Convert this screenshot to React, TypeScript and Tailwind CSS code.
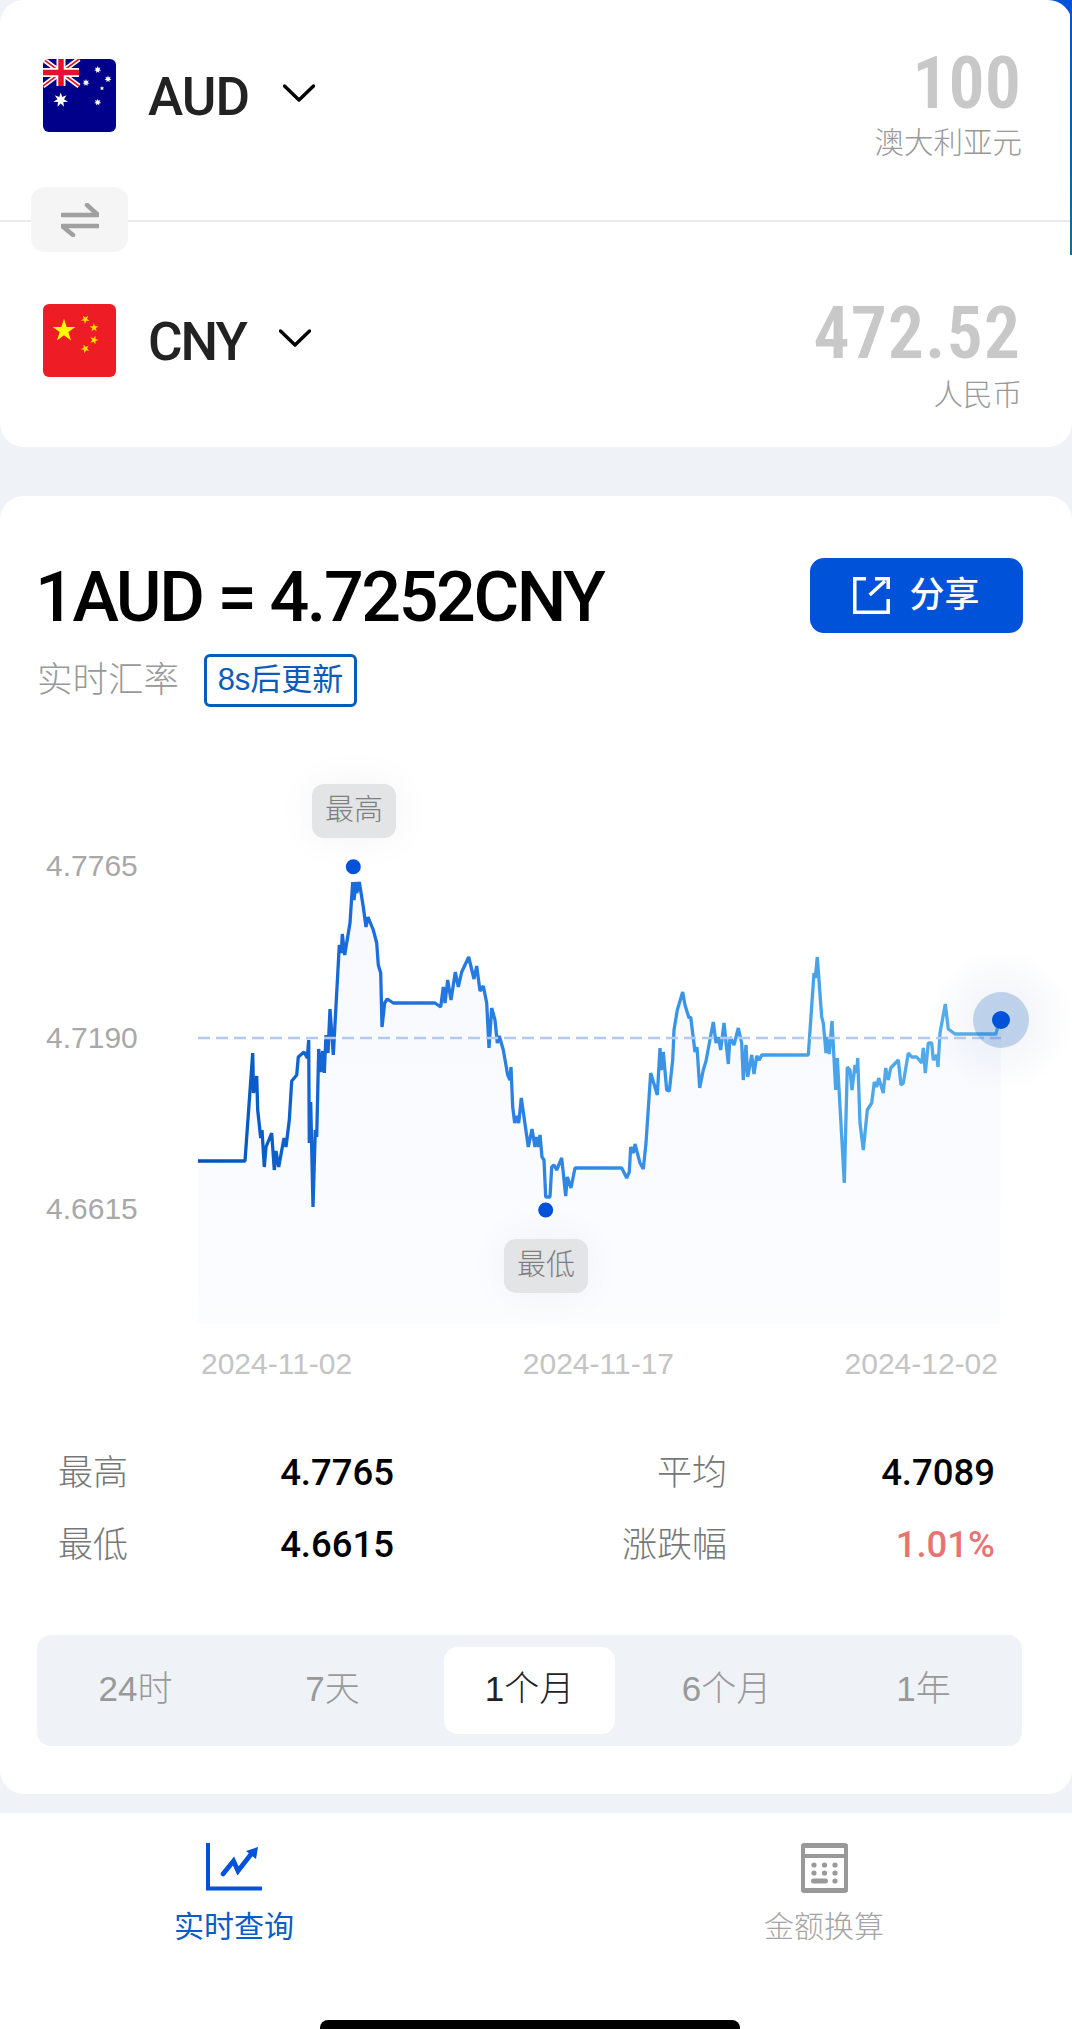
const SANS = "font-['Liberation_Sans','Noto_Sans_CJK_SC',sans-serif]"
const DIN = "font-['Roboto','Noto_Sans_CJK_SC',sans-serif]"

// chart line traced from the reference, in page coordinates
const LINE: [number, number][] = [
  [198, 1161], [245, 1161], [252.7, 1053], [253.5, 1093], [256.7, 1076], [257.7, 1110], [260.7, 1138], [262, 1130],
  [264.3, 1167], [266, 1147], [271.7, 1133], [274.3, 1170], [276, 1151], [278.7, 1167], [284, 1138], [286, 1147],
  [289.3, 1120], [291.7, 1081], [296.7, 1075], [298.3, 1057], [304, 1052], [307.3, 1058], [308.7, 1040], [309.3, 1143],
  [310.7, 1102], [313, 1207], [315.3, 1130], [316.7, 1137], [318.7, 1049], [320.7, 1072], [322.7, 1051], [324.3, 1073],
  [326, 1035], [328, 1053], [330, 1009], [333.3, 1055], [336.7, 993], [339.3, 945], [341.3, 953], [342.3, 934],
  [344.7, 955], [350, 923], [352.7, 882], [354, 900], [356, 882], [356.7, 893], [359.3, 882], [363.3, 907],
  [366, 927], [368, 917], [373.3, 930], [376.7, 943], [378.3, 965], [380.7, 973], [382, 1027], [384.7, 1003],
  [387.3, 999], [393.3, 1003], [435, 1003], [440.7, 1007], [443.3, 987], [445, 1003], [447.7, 980], [451, 1000],
  [455.3, 972], [458.3, 987], [461.7, 972], [468.7, 957], [474, 979], [476.7, 966], [480, 991], [483.3, 986],
  [486.7, 1003], [489, 1048], [491.7, 1008], [495, 1020], [497.3, 1043], [499.3, 1036], [503.3, 1050], [507.7, 1075],
  [510, 1080], [511, 1067], [512.7, 1107], [514.7, 1123], [516.7, 1116], [518.7, 1123], [521.3, 1098], [528.3, 1147],
  [532, 1129], [535, 1147], [536.7, 1137], [538.7, 1147], [540, 1135], [542, 1157], [544, 1160], [545.7, 1197],
  [550, 1197], [551.7, 1167], [554, 1165], [556.7, 1170], [561.7, 1158], [565.7, 1196], [567.3, 1177], [571, 1188],
  [575, 1168], [621.7, 1168], [626.7, 1178], [629.3, 1172], [630.7, 1147], [633.3, 1153], [635, 1144], [640, 1163],
  [643.3, 1169], [646, 1143], [650.7, 1073], [657.3, 1095], [660, 1048], [661.3, 1070], [663.3, 1052], [666.7, 1090],
  [669.3, 1091], [672.7, 1060], [674, 1030], [677.3, 1010], [682.7, 992], [685, 1005], [689, 1018], [690.7, 1017],
  [695, 1052], [697, 1047], [699.7, 1088], [703.3, 1070], [706, 1061], [713.3, 1022], [716, 1043], [718.3, 1037],
  [720.7, 1050], [724, 1023], [728.3, 1064], [730, 1037], [734, 1045], [738.3, 1028], [741.7, 1043], [743.3, 1080],
  [746, 1045], [747.7, 1077], [751.7, 1055], [754, 1074], [756.7, 1056], [759.3, 1060], [761.7, 1055], [808.3, 1055],
  [814, 973], [815.3, 978], [817.3, 957], [821.7, 1017], [823.3, 1023], [826, 1053], [827.3, 1037], [829.3, 1054],
  [832, 1021], [835.7, 1090], [837.3, 1058], [844.3, 1183], [847.3, 1067], [850, 1070], [852, 1090], [855, 1065],
  [856.7, 1073], [857.7, 1058], [860, 1123], [863.3, 1150], [867.3, 1110], [871.7, 1103], [874.3, 1082], [876.7, 1087],
  [878.7, 1078], [883.3, 1093], [885.7, 1068], [888.3, 1080], [890.7, 1068], [898.3, 1060], [901, 1085], [903.3, 1083],
  [908.3, 1053], [911.7, 1057], [916.7, 1057], [921.7, 1063], [923.3, 1048], [925.3, 1073], [928.3, 1043], [931.7, 1043],
  [933.3, 1060], [936.7, 1055], [938, 1067], [940, 1033], [945.3, 1004], [948.3, 1029], [955, 1034], [996, 1034],
  [997.3, 1028], [1001, 1020],
]
const linePoints = LINE.map(([x, y]) => `${x},${y}`).join(' ')
const areaPoints = `198,1324 ${linePoints} 1000,1324`

function star(cx: number, cy: number, r: number, n = 5, inner = 0.38, rot = -90) {
  const pts: string[] = []
  for (let i = 0; i < n * 2; i++) {
    const a = ((rot + (i * 180) / n) * Math.PI) / 180
    const d = i % 2 ? r * inner : r
    pts.push(`${(cx + d * Math.cos(a)).toFixed(2)},${(cy + d * Math.sin(a)).toFixed(2)}`)
  }
  return pts.join(' ')
}

function AudFlag() {
  return (
    <svg width="73" height="73" viewBox="0 0 73 73" className="shrink-0 rounded-[6px]">
      <rect width="73" height="73" fill="#00008b" />
      <path d="M0 0L36 27M36 0L0 27" stroke="#fff" strokeWidth="5" />
      <path d="M0 0L36 27M36 0L0 27" stroke="#e8112d" strokeWidth="1.6" />
      <path d="M18 0V27M0 13.5H36" stroke="#fff" strokeWidth="9" />
      <path d="M18 0V27M0 13.5H36" stroke="#e8112d" strokeWidth="5.5" />
      <polygon points={star(17.7, 41, 7.5, 7, 0.45)} fill="#fff" />
      <polygon points={star(54.7, 10.7, 3.6, 7, 0.5)} fill="#fff" />
      <polygon points={star(65, 20, 3.6, 7, 0.5)} fill="#fff" />
      <polygon points={star(43, 23.7, 3.6, 7, 0.5)} fill="#fff" />
      <polygon points={star(59, 29.3, 2.2, 5, 0.5)} fill="#fff" />
      <polygon points={star(54.7, 43.3, 3.6, 7, 0.5)} fill="#fff" />
    </svg>
  )
}

function CnyFlag() {
  return (
    <svg width="73" height="73" viewBox="0 0 73 73" className="shrink-0 rounded-[6px]">
      <rect width="73" height="73" fill="#ee1c25" />
      <polygon points={star(21, 26.7, 12)} fill="#ffff00" />
      <polygon points={star(42.3, 15.3, 4.6, 5, 0.38, -50)} fill="#ffdd00" />
      <polygon points={star(51, 23.7, 4.6, 5, 0.38, -20)} fill="#ffdd00" />
      <polygon points={star(51, 36, 4.6, 5, 0.38, 0)} fill="#ffdd00" />
      <polygon points={star(42.3, 44.7, 4.6, 5, 0.38, 30)} fill="#ffdd00" />
    </svg>
  )
}

function Chevron() {
  return (
    <svg width="32" height="18" viewBox="0 0 32 18" fill="none" stroke="#000" strokeWidth="3.4" strokeLinecap="round" strokeLinejoin="round">
      <path d="M1.5 2L16 16L30.5 2" />
    </svg>
  )
}

function CurrencyRow({ code, name, value, flag, codeClass, chevron, valueClass, blockClass, labelClass }: { code: string; name: string; value: string; flag: React.ReactNode; codeClass: string; chevron: string; valueClass: string; blockClass: string; labelClass: string }) {
  return (
    <div className="flex items-start justify-between pl-[43px] pr-[51px]">
      <div className="flex items-center">
        {flag}
        <span className={`${DIN} -mb-[2px] ml-[32px] mt-[2px] text-[53px] leading-[73px] font-medium font-stretch-[92%] text-[#222] ${codeClass}`}>{code}</span>
        <span className={chevron}>
          <Chevron />
        </span>
      </div>
      <div className={`text-right ${blockClass}`}>
        <div className={`${DIN} text-[72px] leading-[72px] font-semibold text-[#c8c8c8] ${valueClass}`}>{value}</div>
        <div className={`-mr-[1px] text-[29.5px] leading-[36px] font-light text-[#999] ${labelClass}`}>{name}</div>
      </div>
    </div>
  )
}

function ExchangeCard() {
  return (
    <section className="relative h-[447px] shrink-0 rounded-[24px] bg-white">
      <div className="h-[220px] pt-[59px]">
        <CurrencyRow code="AUD" name="澳大利亚元" value="100" flag={<AudFlag />} codeClass="tracking-[-1px]" chevron="ml-[34px] -mt-[6px]" valueClass="font-stretch-[85%]" blockClass="-mt-[11px]" labelClass="mt-[5px]" />
      </div>
      <div className="h-[2px] bg-[#e9ebee]" />
      <div className="pt-[82px]">
        <CurrencyRow code="CNY" name="人民币" value="472.52" flag={<CnyFlag />} codeClass="tracking-[-2px]" chevron="ml-[33px] -mt-[6px]" valueClass="font-stretch-[85%] tracking-[1px]" blockClass="-mt-[6px]" labelClass="mt-[7px]" />
      </div>
      {/* swap button sits on the divider */}
      <button className="absolute left-[31px] top-[187px] flex h-[65px] w-[97px] items-center justify-center rounded-[14px] bg-[#f5f5f5]">
        <svg width="38" height="34" viewBox="0 0 38 34" fill="none" stroke="#a0a0a0" strokeWidth="4.5" strokeLinecap="round" strokeLinejoin="round">
          <path d="M1 12H37L26 2" />
          <path d="M37 23H1L12 32" />
        </svg>
      </button>
    </section>
  )
}

function Tag({ label, className }: { label: string; className: string }) {
  return (
    <div className={`absolute flex h-[54px] w-[84px] items-center justify-center rounded-[12px] bg-[#e3e4e5] text-[29px] font-light text-[#7f7f7f] shadow-[0_0_40px_rgba(0,0,0,0.05)] ${className}`}>
      {label}
    </div>
  )
}

function Chart() {
  return (
    <div className="relative h-[633px]">
      <svg viewBox="0 707 1072 633" className="block h-full w-full">
        <defs>
          <linearGradient id="stroke" gradientUnits="userSpaceOnUse" x1="198" y1="0" x2="1000" y2="0">
            <stop offset="0" stopColor="#0052b9" />
            <stop offset="0.2" stopColor="#1a6cdc" />
            <stop offset="0.45" stopColor="#2f86e4" />
            <stop offset="0.8" stopColor="#49a5ea" />
            <stop offset="1" stopColor="#5aaee8" />
          </linearGradient>
          <linearGradient id="area" gradientUnits="userSpaceOnUse" x1="0" y1="880" x2="0" y2="1324">
            <stop offset="0" stopColor="#0052d9" stopOpacity="0.035" />
            <stop offset="1" stopColor="#0052d9" stopOpacity="0.015" />
          </linearGradient>
          <radialGradient id="glow">
            <stop offset="0.3" stopColor="#1d3a78" stopOpacity="0.05" />
            <stop offset="1" stopColor="#1d3a78" stopOpacity="0" />
          </radialGradient>
        </defs>
        <circle cx="1001" cy="1020" r="72" fill="url(#glow)" />
        <polygon points={areaPoints} fill="url(#area)" />
        <polyline points={linePoints} fill="none" stroke="url(#stroke)" strokeWidth="3.3" strokeLinejoin="bevel" />
        <line x1="198" y1="1038" x2="1001" y2="1038" stroke="#b3c9f0" strokeWidth="2.5" strokeDasharray="12 6" />
        <circle cx="1001" cy="1020" r="28" fill="#0052b9" fillOpacity="0.22" />
        <circle cx="1001" cy="1020" r="9" fill="#0052d9" />
        <circle cx="353.3" cy="866.7" r="7.5" fill="#0052d9" />
        <circle cx="545.7" cy="1210" r="7.5" fill="#0052d9" />
      </svg>
      <span className="absolute left-[46px] top-[139px] text-[30px] leading-[40px] text-[#a8a8a8]">4.7765</span>
      <span className="absolute left-[46px] top-[311px] text-[30px] leading-[40px] text-[#a8a8a8]">4.7190</span>
      <span className="absolute left-[46px] top-[482px] text-[30px] leading-[40px] text-[#a8a8a8]">4.6615</span>
      <Tag label="最高" className="left-[312px] top-[77px]" />
      <Tag label="最低" className="left-[504px] top-[532px]" />
    </div>
  )
}

function Stats() {
  const label = 'text-[35px] leading-[72px] font-light text-[#777]'
  const num = "font-['Roboto',sans-serif] text-right text-[36.5px] leading-[72px] font-medium"
  return (
    <div className="mt-[51px] grid grid-cols-[142px_194px_333px_268px] pl-[58px]">
      <span className={label}>最高</span>
      <span className={`${num} text-black`}>4.7765</span>
      <span className={`${label} text-right`}>平均</span>
      <span className={`${num} text-black`}>4.7089</span>
      <span className={label}>最低</span>
      <span className={`${num} text-black`}>4.6615</span>
      <span className={`${label} text-right`}>涨跌幅</span>
      <span className={`${num} text-[#e97373]`}>1.01%</span>
    </div>
  )
}

function RangeTabs() {
  const tabs = ['24时', '7天', '1个月', '6个月', '1年']
  return (
    <div className="mx-[37px] mt-[54px] grid h-[111px] w-[985px] grid-cols-5 items-center rounded-[14px] bg-[#eff3f8]">
      {tabs.map((tab) => (
        <button
          key={tab}
          className={
            tab === '1个月'
              ? 'mx-[13px] h-[87px] rounded-[14px] bg-white pb-[2px] text-[35px] font-light text-[#222]'
              : 'mx-[13px] h-[87px] pb-[2px] text-[35px] font-light text-[#999]'
          }
        >
          {tab}
        </button>
      ))}
    </div>
  )
}

function RateCard() {
  return (
    <section className="mt-[49px] h-[1298px] shrink-0 rounded-[24px] bg-white pt-[62px]">
      <div className="flex h-[75px] items-start justify-between pl-[35px] pr-[49px]">
        <h1 className={`${DIN} pt-[2px] text-[70px] leading-[75px] font-medium font-stretch-[89%] tracking-[-2.4px] text-black`}>1AUD = 4.7252CNY</h1>
        <button className="flex h-[75px] w-[213px] items-center justify-center gap-[19px] rounded-[14px] bg-[#0052d9] text-[35px] font-medium text-white">
          <svg width="37" height="37" viewBox="0 0 37 37" fill="none" stroke="#fff" strokeWidth="3.5">
            <path d="M13 1.8H1.8V35.2H35.2V22" />
            <path d="M22 1.8H35.2V12" />
            <path d="M16.7 18L32 4" />
          </svg>
          分享
        </button>
      </div>
      <div className="mt-[21px] flex items-center pl-[37px]">
        <span className="w-[167px] text-[35.5px] leading-[53px] font-light text-[#999]">实时汇率</span>
        <span className="flex h-[53px] w-[153px] items-center justify-center rounded-[6px] border-[3px] border-[#0b5cb8] text-[31px] text-[#0b5cb8]">8s后更新</span>
      </div>
      <Chart />
      <div className="flex h-[46px] items-center justify-between pl-[201px] pr-[74px] text-[30px] text-[#c4c4c4]">
        <span>2024-11-02</span>
        <span>2024-11-17</span>
        <span>2024-12-02</span>
      </div>
      <Stats />
      <RangeTabs />
    </section>
  )
}

function BottomNav() {
  return (
    <nav className="relative mt-[19px] flex-1 bg-white pl-[174px] pt-[30px]">
      <div className="flex gap-[470px]">
        <div className="flex w-[120px] flex-col items-center">
          <svg width="56" height="50" viewBox="0 0 56 50" fill="none" stroke="#0052d9">
            <path d="M2 0V45.5H55" strokeWidth="4" strokeLinecap="round" />
            <path d="M17 31L27.5 18L32 28L46 10" strokeWidth="4.8" strokeLinecap="round" />
            <polygon points="52,4 40,8 50,16" fill="#0052d9" stroke="none" />
          </svg>
          <span className="mt-[18px] text-[30px] leading-[32px] text-[#0b5cc5]">实时查询</span>
        </div>
        <div className="flex w-[120px] flex-col items-center">
          <svg width="47" height="50" viewBox="0 0 47 50">
            <rect width="47" height="50" rx="3" fill="#999" />
            <rect x="4" y="5" width="39" height="6" fill="#fff" />
            <rect x="4" y="15" width="39" height="30" fill="#fff" />
            <g fill="#999">
              <circle cx="13" cy="22" r="2.6" />
              <circle cx="23.5" cy="22" r="2.6" />
              <circle cx="34" cy="22" r="2.6" />
              <circle cx="13" cy="30" r="2.6" />
              <circle cx="23.5" cy="30" r="2.6" />
              <circle cx="34" cy="30" r="2.6" />
              <rect x="10" y="35.5" width="17" height="5" rx="2.5" />
              <circle cx="34" cy="38" r="2.6" />
            </g>
          </svg>
          <span className="mt-[18px] text-[30px] leading-[32px] font-light text-[#a5a5a5]">金额换算</span>
        </div>
      </div>
      {/* home indicator */}
      <div className="absolute bottom-0 left-[320px] h-[9px] w-[420px] rounded-t-[8px] bg-black" />
    </nav>
  )
}

export default function App() {
  return (
    <div className={`${SANS} relative flex h-[2029px] w-[1072px] flex-col overflow-hidden bg-[#eff3f8]`}>
      {/* blue sliver behind the first card's corner */}
      <div className="absolute right-0 top-0 h-[30px] w-[24px] bg-[#0052d9]" />
      <ExchangeCard />
      <div className="absolute right-0 top-0 h-[255px] w-[2px] bg-linear-to-b from-[#0052d9] to-[#14708a]" />
      <RateCard />
      <BottomNav />
    </div>
  )
}
